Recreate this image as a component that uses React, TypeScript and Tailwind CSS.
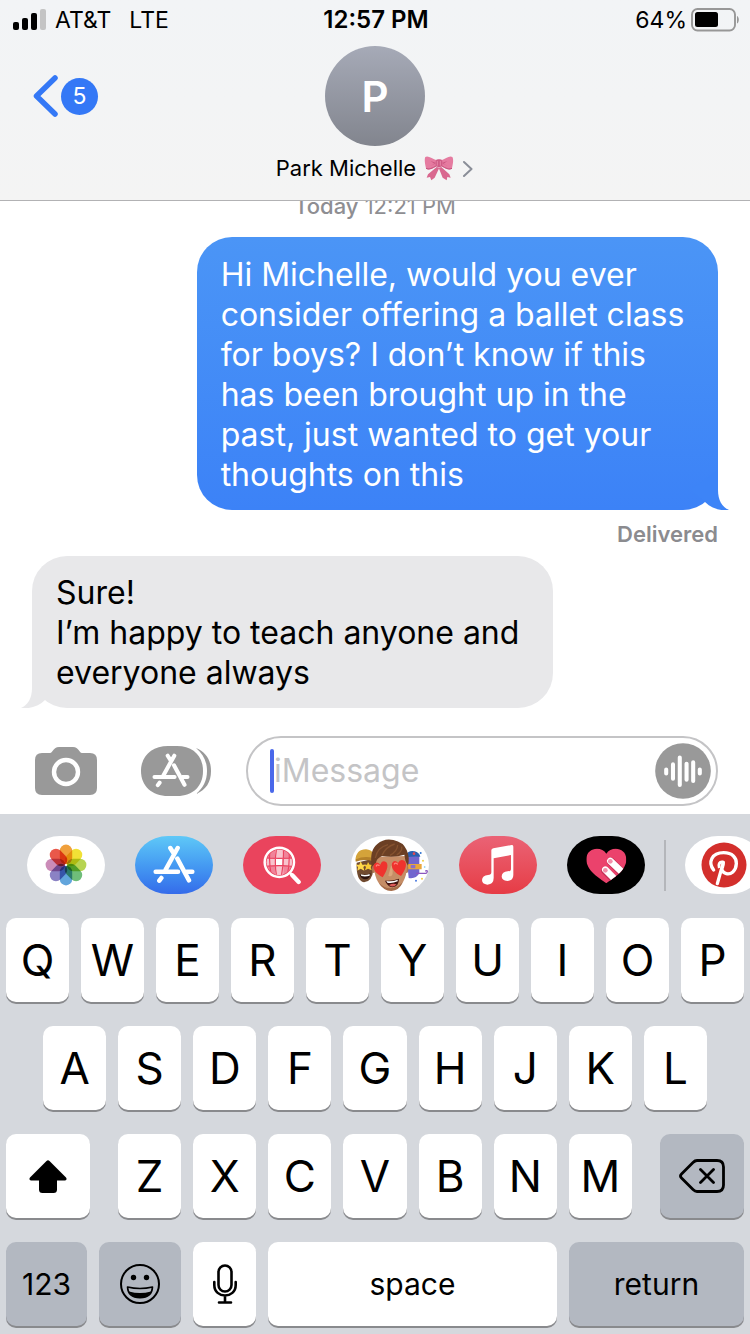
import type { ReactNode } from "react";

function SignalBars() {
  return (
    <svg width="34" height="22" viewBox="0 0 34 22" aria-hidden="true">
      <rect x="0" y="13" width="6" height="8" rx="2" fill="#000" />
      <rect x="9" y="9" width="6" height="12" rx="2" fill="#000" />
      <rect x="18" y="4" width="6" height="17" rx="2" fill="#000" />
      <rect x="27" y="0" width="6" height="21" rx="2" fill="#c4c4c4" />
    </svg>
  );
}

function Battery() {
  return (
    <svg width="48" height="24" viewBox="0 0 48 24" aria-hidden="true">
      <rect x="1" y="1" width="43" height="21.5" rx="5.5" fill="none" stroke="#979797" strokeWidth="1.9" />
      <rect x="4" y="4" width="23" height="15" rx="2.5" fill="#000" />
      <path d="M46 8 C48.4 9 48.4 14.5 46 15.5 Z" fill="#979797" />
    </svg>
  );
}

function Bow() {
  return (
    <svg width="30" height="26" viewBox="0 0 90 78" aria-hidden="true">
      <path d="M38 36 L12 58 L8 68 L18 66 L22 76 L32 68 L46 38 Z" fill="#d9688f" />
      <path d="M52 36 L76 58 L80 68 L70 66 L68 76 L56 68 L44 38 Z" fill="#d9688f" />
      <path d="M38 16 C26 10 10 0 4 6 C0 14 4 30 6 40 C12 50 28 40 38 34 Z" fill="#e57ba0" />
      <path d="M52 16 C64 10 78 0 85 6 C90 14 86 30 84 40 C78 50 62 40 52 34 Z" fill="#e57ba0" />
      <path d="M36 24 L20 18 L32 27 L18 33 Z M54 24 L70 18 L58 27 L72 33 Z" fill="#c9557f" />
      <path d="M6 40 C14 44 26 40 37 32 M84 40 C76 44 64 40 53 32" fill="none" stroke="#c4527d" strokeWidth="3" />
      <rect x="35" y="13" width="20" height="23" rx="7" fill="#cf5c86" />
      <path d="M40 18 L40 32 M49 18 L49 32" stroke="#eb8fb0" strokeWidth="2.5" />
    </svg>
  );
}

function StoreGlyph({ className }: { className: string }) {
  return (
    <svg className={className} viewBox="456 75 132 120" fill="none" stroke="#fff" strokeWidth="13.5" strokeLinecap="round" aria-hidden="true">
      <path d="M533 84 L497 149 M511 84 L521 100 M532 116 L567 181 M467 155 H534 M560 155 H577 M484 174 L478 182" />
    </svg>
  );
}

function CameraIcon() {
  return (
    <svg width="62" height="48" viewBox="0 0 62 48" aria-hidden="true">
      <path d="M7 6 H15 C18 6 18 0 24 0 H38 C44 0 44 6 47 6 H55 Q62 6 62 13 V41 Q62 48 55 48 H7 Q0 48 0 41 V13 Q0 6 7 6 Z" fill="#999" />
      <circle cx="31" cy="25" r="12" fill="none" stroke="#fff" strokeWidth="4.4" />
    </svg>
  );
}

function WaveIcon() {
  return (
    <svg width="56" height="56" viewBox="1275 69 165 165" aria-hidden="true">
      <circle cx="1357.500" cy="151.500" r="82" fill="#999" />
      <g stroke="#fff" strokeWidth="12" strokeLinecap="round">
        <path d="M1308 147 V159 M1328 132 V174 M1348 112 V193 M1368 130 V177 M1387.500 126 V181 M1407 147 V159" />
      </g>
    </svg>
  );
}

const petals = ["#f0a03c", "#f1e136", "#b7d452", "#6fbd7a", "#62a5dc", "#8b82c4", "#cb8cb8", "#e9584a"];

function PhotosGlyph() {
  return (
    <svg className="isolate" width="42" height="42" viewBox="-21 -21 42 42" aria-hidden="true">
      {petals.map((fill, i) => (
        <rect key={fill} x="-6.200" y="-20.400" width="12.400" height="19.600" rx="6.200" fill={fill} transform={`rotate(${i * 45})`} className="mix-blend-multiply" />
      ))}
      <circle r="1" fill="#fff" />
    </svg>
  );
}

function SearchGlyph() {
  return (
    <svg width="40" height="40" viewBox="94 74 120 120" aria-hidden="true">
      <defs>
        <clipPath id="lens">
          <circle cx="146" cy="126" r="38" />
        </clipPath>
      </defs>
      <g clipPath="url(#lens)">
        <rect x="106" y="86" width="80" height="80" fill="#f0849a" />
        <path d="M134 84 H158 V116 H134 Z M106 116 H134 V136 H106 Z M158 116 H190 V136 H158 Z M134 136 H158 V168 H134 Z" fill="#f8c3cd" />
        <path d="M136 116 H155 V135 H136 Z" fill="#fff" />
        <path d="M138 84 Q130 126 138 168 M158 84 Q160 126 152 168 M104 112 Q146 116 188 112 M104 138 Q146 134 188 138 M118 90 Q114 126 122 164 M175 90 Q178 126 170 164" fill="none" stroke="#ea425f" strokeWidth="3.500" />
      </g>
      <circle cx="146" cy="126" r="44" fill="none" stroke="#fff" strokeWidth="7.500" />
      <path d="M178 158 L186 166" stroke="#fff" strokeWidth="8" />
      <path d="M185 165 L204 185" stroke="#fff" strokeWidth="13" strokeLinecap="round" />
    </svg>
  );
}

function MemojiGlyph() {
  return (
    <svg width="78" height="58" viewBox="363 48 234 174" aria-hidden="true">
      <path d="M380 128 Q378 182 402 187 Q426 186 430 150 L428 116 Z" fill="#704a2f" />
      <path d="M376 122 Q378 88 408 88 Q424 90 430 100 V122 Q402 114 376 122 Z" fill="#d4a33a" />
      <path d="M378 118 Q402 106 430 114 V124 Q402 116 377 125 Z" fill="#b4812a" />
      <path d="M392 124 L397 134 L408 134 L400 141 L403 152 L392 146 L382 152 L384 141 L377 134 L388 134 Z" fill="#ffd84a" />
      <path d="M414 126 L419 134 H427 L422 141 L425 151 L414 146 L405 151 L408 141 L402 134 H411 Z" fill="#f8c935" />
      <path d="M389 162 Q406 168 422 160 Q420 178 405 178 Q392 176 389 162 Z" fill="#2b120d" />
      <path d="M392 163 Q406 168 419 162 V167 Q406 171 394 168 Z" fill="#fff" />
      <path d="M530 108 Q548 98 568 108 L568 160 Q558 178 536 174 Z" fill="#7165ce" />
      <path d="M528 104 Q536 90 554 94 Q568 98 571 110 Q548 108 530 112 Z" fill="#295fae" />
      <path d="M532 132 H575 V148 H532 Z" fill="#e8a63b" />
      <path d="M542 135 H556 V145 H542 Z" fill="#8a6fc9" />
      <path d="M558 160 H588 Q593 158 592 153 Q589 150 586 154" fill="none" stroke="#8c56bd" strokeWidth="4" />
      <circle cx="552" cy="101" r="4" fill="#e34953" />
      <circle cx="572" cy="99" r="3" fill="#3274d0" />
      <circle cx="579" cy="122" r="3" fill="#f0ce46" />
      <circle cx="584" cy="141" r="2.500" fill="#70c5e8" />
      <circle cx="576" cy="176" r="3" fill="#f2cd43" />
      <circle cx="558" cy="182" r="3" fill="#4c7ce0" />
      <ellipse cx="431" cy="147" rx="5" ry="12" fill="#b07852" />
      <ellipse cx="530" cy="147" rx="5" ry="12" fill="#b07852" />
      <path d="M431 110 Q428 176 456 200 Q482 222 508 200 Q536 174 531 108 Z" fill="#c58d66" />
      <path d="M446 188 Q482 222 519 186 Q507 212 484 213 Q460 212 446 188 Z" fill="#a56c49" />
      <path d="M425 140 Q418 90 442 72 Q462 54 490 60 Q520 66 530 90 Q540 112 534 138 Q524 122 523 104 Q494 114 456 108 Q438 116 437 132 Z" fill="#6b3f24" />
      <path d="M436 114 Q442 82 474 74 M456 106 Q468 80 494 72 M480 106 Q502 94 503 75 M500 105 Q518 94 515 80" fill="none" stroke="#85522f" strokeWidth="4" />
      <path d="M484 134 Q491 157 486 166 Q482 171 475 167" fill="#dba67c" />
      <path d="M458 172 C440 163 425 147 432 133 Q440 122 451 134 Q457 118 469 127 C478 138 467 158 458 172 Z" fill="#ef332e" />
      <path d="M513 168 C499 162 482 148 486 130 Q494 117 504 129 Q511 114 524 123 C534 134 523 155 513 168 Z" fill="#ef332e" />
      <path d="M439 138 Q441 132 447 136 M493 132 Q496 127 502 132" fill="none" stroke="#ff8379" strokeWidth="4" strokeLinecap="round" />
      <path d="M465 182 Q486 184 507 176 Q507 199 487 202 Q472 199 465 182 Z" fill="#431510" />
      <path d="M469 183 Q487 186 503 179 V184 Q486 191 472 188 Z" fill="#fff" />
      <path d="M477 195 Q489 188 500 193 Q489 205 477 195 Z" fill="#dd5a59" />
    </svg>
  );
}

function MusicGlyph() {
  return (
    <svg width="34" height="42" viewBox="116 72 102 126" aria-hidden="true">
      <path d="M147 91 Q147 86 153 85 L208 75 Q213 74 213 80 V165 Q213 182 195 183 Q178 182 178 169 Q179 156 196 154 Q206 154 206 147 V105 L154 115 V174 Q154 193 135 194 Q119 192 119 180 Q120 167 137 165 Q147 165 147 157 Z" fill="#fff" />
    </svg>
  );
}

function HeartGlyph() {
  return (
    <svg width="42" height="37" viewBox="434 84 126 111" aria-hidden="true">
      <defs>
        <clipPath id="heart">
          <path d="M498 193 C478 178 438 156 438 121 C438 84 484 80 498 104 C512 80 558 84 558 121 C558 156 518 178 498 193 Z" />
        </clipPath>
      </defs>
      <g clipPath="url(#heart)">
        <rect x="434" y="84" width="126" height="111" fill="#eb426c" />
        <path d="M495 155 L532 192 M512 128 L555 171" stroke="#c52f55" strokeWidth="24" strokeLinecap="round" />
        <path d="M495 152 L532 189 M510 126 L555 169" stroke="#fff" strokeWidth="20" strokeLinecap="round" />
        <circle cx="495" cy="154" r="7" fill="#f391ab" />
        <circle cx="510" cy="127" r="7" fill="#f391ab" />
      </g>
    </svg>
  );
}

function PinGlyph() {
  return (
    <svg className="shrink-0" width="46" height="46" viewBox="784 65 138 138" aria-hidden="true">
      <circle cx="853" cy="134" r="67.500" fill="#d32f2c" />
      <path d="M822 149 C804 126 816 97 852 97 C878 97 891 112 890 130 C889 153 873 163 860 160 C852 158 848 152 846 147" fill="none" stroke="#fff" strokeWidth="10" strokeLinecap="round" />
      <path d="M851 126 L833 190" stroke="#fff" strokeWidth="10" strokeLinecap="round" />
      <path d="M839 143 C835 132 840 124 848 125 C854 127 850 136 848 144" fill="none" stroke="#fff" strokeWidth="9" />
    </svg>
  );
}

function BubbleTail({ className, fill }: { className: string; fill: string }) {
  return (
    <svg className={className} width="40" height="40" viewBox="0 0 40 40" aria-hidden="true">
      <path d="M28 0 V20 C28 30 32 37 39 40 C31 41 22 39 15 32 L0 20 Z" fill={fill} />
    </svg>
  );
}

function AppPill({ label, tone, children }: { label: string; tone: string; children: ReactNode }) {
  return (
    <button aria-label={label} className={`flex h-[58px] w-[78px] shrink-0 items-center justify-center overflow-hidden rounded-[33px/29px] ${tone}`}>
      {children}
    </button>
  );
}

function Key({ children, label, className = "flex-1 bg-white text-[44px]" }: { children: ReactNode; label?: string; className?: string }) {
  return (
    <button aria-label={label} className={`flex h-[84px] min-w-0 items-center justify-center rounded-[10px] shadow-[0_2px_0_#898a8d] ${className}`}>
      {children}
    </button>
  );
}

function LetterKeys({ letters }: { letters: string }) {
  return (
    <>
      {letters.split("").map((c) => (
        <Key key={c}>{c}</Key>
      ))}
    </>
  );
}

function Header() {
  return (
    <header className="shrink-0 border-b border-[#b2b2b4] bg-linear-to-b from-[#f2f4f6] to-[#f4f4f4]">
      <div className="grid h-10 grid-cols-3 items-center pr-[11px] pl-[13px] text-[23px] leading-6">
        <div className="flex items-center gap-2">
          <SignalBars />
          <span>AT&amp;T</span>
          <span className="pl-[10px]">LTE</span>
        </div>
        <div className="text-center text-[24px] font-semibold">12:57 PM</div>
        <div className="flex items-center justify-end gap-1">
          <span>64%</span>
          <Battery />
        </div>
      </div>
      <div className="grid h-40 grid-cols-[1fr_auto_1fr] items-start">
        <button aria-label="Back, 5 unread" className="mt-[35px] ml-[33px] flex items-center gap-[3px] justify-self-start">
          <svg width="25" height="42" viewBox="0 0 25 42" fill="none" stroke="#3478f6" strokeWidth="5.500" strokeLinecap="round" strokeLinejoin="round" aria-hidden="true">
            <path d="M22 3 L3.500 21 L22 39" />
          </svg>
          <span className="flex size-[37px] items-center justify-center rounded-full bg-[#3478f6] text-[23px] text-white">5</span>
        </button>
        <button className="flex flex-col items-center pt-[6px]">
          <span className="flex size-[100px] items-center justify-center rounded-full bg-linear-to-b from-[#a6aab7] to-[#82858e] text-[42px] font-semibold text-white">P</span>
          <span className="mt-2 flex items-center gap-2 text-[22px] leading-7">
            Park Michelle
            <Bow />
            <svg width="12" height="18" viewBox="0 0 12 18" fill="none" stroke="#8a8e98" strokeWidth="2" strokeLinecap="round" strokeLinejoin="round" aria-hidden="true">
              <path d="M2 3 L9.500 10 L2 17" />
            </svg>
          </span>
        </button>
        <span />
      </div>
    </header>
  );
}

export default function App() {
  return (
    <div className="flex h-screen flex-col overflow-hidden bg-white font-['Inter','Liberation_Sans',sans-serif] text-black">
      <Header />

      <main className="flex min-h-0 flex-1 flex-col justify-end overflow-hidden px-8">
        <p className="mb-[19px] shrink-0 text-center text-[22px] leading-6 text-[#8e8e92]">
          <span className="font-medium">Today</span> 12:21 PM
        </p>
        <div className="relative w-[76%] shrink-0 self-end rounded-[35px] bg-linear-to-b from-[#4b95f6] to-[#3c82f7] px-6 pt-[18px] pb-[15px] text-[32px] leading-10 text-white">
          Hi Michelle, would you ever consider offering a ballet class for boys? I don’t know if this has been brought up in the past, just wanted to get your thoughts on this
          <BubbleTail className="absolute -right-3 bottom-0" fill="#3d84f7" />
        </div>
        <p className="mt-3 mb-[10px] shrink-0 text-right text-[22px] leading-6 font-semibold text-[#8b8b8f]">Delivered</p>
        <div className="relative w-[76%] shrink-0 rounded-[35px] bg-[#e8e8ea] px-6 pt-[17px] pb-[15px] text-[32px] leading-10">
          Sure!
          <br />
          I’m happy to teach anyone and everyone always
          <BubbleTail className="absolute bottom-0 -left-3 -scale-x-100" fill="#e8e8ea" />
        </div>
      </main>

      <form className="flex shrink-0 items-center pt-7 pr-8 pb-2 pl-[35px]" onSubmit={(e) => e.preventDefault()}>
        <button type="button" aria-label="Camera">
          <CameraIcon />
        </button>
        <button type="button" aria-label="Apps" className="relative mr-[35px] ml-11 flex h-[50px] w-[70px] items-center">
          <svg className="absolute inset-0" width="70" height="50" viewBox="0 0 70 50" aria-hidden="true">
            <path d="M27 0 H36 C52 0 62 10 62 25 C62 40 52 50 36 50 H27 C11 50 0 40 0 25 C0 10 11 0 27 0 Z" fill="#999" />
            <path d="M55 2 C65 6 70 14 70 25 C70 36 65 44 55 48 C62 42 66 35 66 25 C66 15 62 8 55 2 Z" fill="#999" />
          </svg>
          <StoreGlyph className="relative ml-[10px] h-9 w-10" />
        </button>
        <div className="flex h-[70px] min-w-0 flex-1 items-center rounded-full border-2 border-[#c4c4c6] pr-[5px] pl-[22px]">
          <span className="h-11 w-1 shrink-0 rounded-xs bg-[#4a68ea]" />
          <input aria-label="iMessage" placeholder="iMessage" className="min-w-0 flex-1 bg-transparent text-[32px] leading-10 outline-none placeholder:text-[#c4c4c6]" />
          <button type="button" aria-label="Record audio">
            <WaveIcon />
          </button>
        </div>
      </form>

      <section aria-label="Keyboard" className="shrink-0 bg-[#d5d8dd] pb-2">
        <div className="flex h-[104px] items-center overflow-hidden pb-[2px] pl-[27px]">
          <div className="flex shrink-0 gap-[30px]">
            <AppPill label="Photos" tone="bg-white"><PhotosGlyph /></AppPill>
            <AppPill label="App Store" tone="bg-linear-to-b from-[#5fc8f7] to-[#356bea]"><StoreGlyph className="h-10 w-11" /></AppPill>
            <AppPill label="Images" tone="bg-[#ea445d]"><SearchGlyph /></AppPill>
            <AppPill label="Memoji" tone="bg-white"><MemojiGlyph /></AppPill>
            <AppPill label="Music" tone="bg-linear-to-b from-[#ea6275] to-[#e63b45]"><MusicGlyph /></AppPill>
            <AppPill label="Digital Touch" tone="bg-black"><HeartGlyph /></AppPill>
          </div>
          <span className="mx-[19px] h-[51px] w-[2px] shrink-0 bg-[#b4b6ba]" />
          <AppPill label="Pinterest" tone="bg-white"><PinGlyph /></AppPill>
        </div>
        <div className="flex flex-col gap-6">
          <div className="flex gap-3 px-[6px]"><LetterKeys letters="QWERTYUIOP" /></div>
          <div className="flex gap-3 px-[43px]"><LetterKeys letters="ASDFGHJKL" /></div>
          <div className="flex gap-7 px-[6px]">
            <Key label="Shift" className="w-[84px] shrink-0 bg-white">
              <svg width="38" height="33" viewBox="0 0 38 33" aria-hidden="true">
                <path d="M17.500 1 Q19 -0.500 20.500 1 L37 17.500 Q38.500 20 36 20.500 H28 V29.500 Q28 33 24.500 33 H13.500 Q10 33 10 29.500 V20.500 H2 Q-0.500 20 1 17.500 Z" fill="#000" />
              </svg>
            </Key>
            <div className="flex min-w-0 flex-1 gap-3"><LetterKeys letters="ZXCVBNM" /></div>
            <Key label="Delete" className="w-[84px] shrink-0 bg-[#b3b8c1]">
              <svg width="46" height="34" viewBox="0 0 46 34" fill="none" stroke="#000" strokeWidth="2.800" strokeLinecap="round" strokeLinejoin="round" aria-hidden="true">
                <path d="M18 1.500 H38 Q44.500 1.500 44.500 8 V26 Q44.500 32.500 38 32.500 H18 Q16 32.500 14 30.500 L2.500 19 Q0.500 17 2.500 15 L14 3.500 Q16 1.500 18 1.500 Z M21.500 10.500 L34.500 23.500 M34.500 10.500 L21.500 23.500" />
              </svg>
            </Key>
          </div>
          <div className="flex gap-3 px-[6px]">
            <Key className="flex-[81_1_0%] bg-[#b3b8c1] text-[30px]">123</Key>
            <Key label="Emoji" className="flex-[82_1_0%] bg-[#b3b8c1]">
              <svg width="40" height="40" viewBox="0 0 40 40" aria-hidden="true">
                <circle cx="20" cy="20" r="19" fill="none" stroke="#000" strokeWidth="2" />
                <circle cx="13.500" cy="13.500" r="2.700" />
                <circle cx="26.500" cy="13.500" r="2.700" />
                <path d="M7.500 23 Q20 26 32.500 23 Q32 33.500 20 33.800 Q8 33.500 7.500 23 Z" fill="none" stroke="#000" strokeWidth="1.600" strokeLinejoin="round" />
                <path d="M9 27.500 Q20 30.500 31 27.500 Q28 33.800 20 33.800 Q12 33.800 9 27.500 Z" />
              </svg>
            </Key>
            <Key label="Dictate" className="flex-[63_1_0%] bg-white">
              <svg width="24" height="40" viewBox="0 0 24 40" fill="none" stroke="#000" strokeWidth="2.600" strokeLinecap="round" aria-hidden="true">
                <rect x="5.500" y="1.500" width="13" height="26" rx="6.500" />
                <path d="M1.300 18 V21 C1.300 35 22.700 35 22.700 21 V18 M12 31.500 V38 M6 38.500 H18" />
              </svg>
            </Key>
            <Key className="flex-[289_1_0%] bg-white text-[30px]">space</Key>
            <Key className="flex-[175_1_0%] bg-[#b3b8c1] text-[30px]">return</Key>
          </div>
        </div>
      </section>
    </div>
  );
}
